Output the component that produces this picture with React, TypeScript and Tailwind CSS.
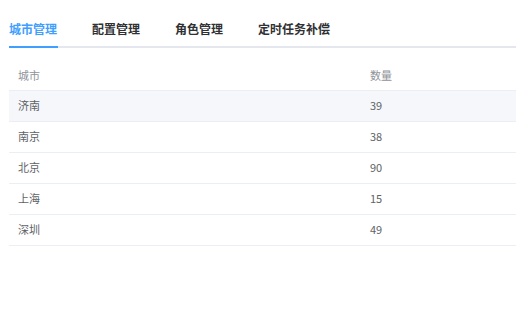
const tabs = ["城市管理", "配置管理", "角色管理", "定时任务补偿"];

const rows = [
  { city: "济南", count: 39 },
  { city: "南京", count: 38 },
  { city: "北京", count: 90 },
  { city: "上海", count: 15 },
  { city: "深圳", count: 49 },
];

const App = () => {
  const active = 0;

  return (
    <div
      className="w-[523px] h-[332px] bg-white pl-[9px] pr-[7px] pt-[12px]"
      style={{ fontFamily: '"Noto Sans CJK SC", "Noto Sans", sans-serif' }}
    >
      {/* tabs */}
      <div className="relative flex gap-[35px] border-b-2 border-[#e4e7ed]">
        {tabs.map((tab, i) => (
          <div
            key={tab}
            className={
              "relative h-[34px] flex items-center text-[12px] font-semibold " +
              (i === active ? "text-[#409eff]" : "text-[#303133]")
            }
          >
            {tab}
            {i === active && (
              <span className="absolute left-0 right-[-1px] bottom-[-2px] h-[2px] bg-[#409eff]" />
            )}
          </div>
        ))}
      </div>

      {/* table */}
      <table className="mt-[12px] w-full border-collapse text-[11px]">
        <thead>
          <tr className="border-b border-[#ebeef5]">
            <th className="w-[352px] h-[30px] pl-[9px] text-left font-normal text-[#909399]">
              城市
            </th>
            <th className="h-[30px] pl-[9px] text-left font-normal text-[#909399]">
              数量
            </th>
          </tr>
        </thead>
        <tbody>
          {rows.map((row, i) => (
            <tr
              key={row.city}
              className={
                "border-b border-[#ebeef5] " + (i === 0 ? "bg-[#f5f7fa]" : "")
              }
            >
              <td className="h-[31px] pl-[9px] text-[#606266]">{row.city}</td>
              <td className="h-[31px] pl-[9px] text-[#606266]">{row.count}</td>
            </tr>
          ))}
        </tbody>
      </table>
    </div>
  );
};

export default App;
